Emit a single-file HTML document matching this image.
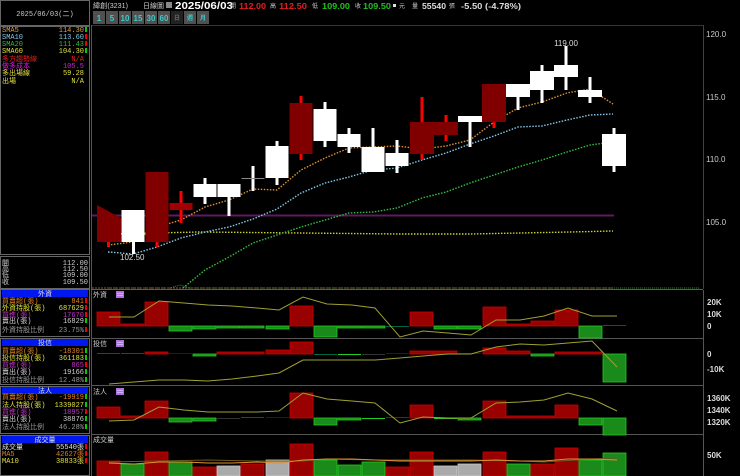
<!DOCTYPE html>
<html><head><meta charset="utf-8"><style>
html,body{margin:0;padding:0;background:#000;width:740px;height:476px;overflow:hidden}
svg{display:block}
text{font-family:"Liberation Sans","Noto Sans CJK TC",sans-serif}
.m{font-family:"Liberation Mono","Noto Sans CJK TC",monospace;font-size:7px}
</style></head><body>
<svg width="740" height="476" viewBox="0 0 740 476" xmlns="http://www.w3.org/2000/svg">
<rect width="740" height="476" fill="#000"/>
<!-- LEFT PANEL -->
<rect x="0.5" y="0.5" width="89" height="25" fill="none" stroke="#666"/>
<text x="45" y="16" class="m" fill="#ccc" text-anchor="middle">2025/06/03(二)</text>
<rect x="0.5" y="26.5" width="89" height="228" fill="none" stroke="#666"/>
<g class="m">
<text x="2" y="32" fill="#e0a040" class="m">SMA5</text><text x="84" y="32" fill="#e0a040" text-anchor="end" class="m">114.30</text><rect x="85" y="27" width="2" height="5" fill="#0c0"/>
<text x="2" y="39" fill="#80c8e8" class="m">SMA10</text><text x="84" y="39" fill="#80c8e8" text-anchor="end" class="m">113.60</text><rect x="85" y="34" width="2" height="5" fill="#e00"/>
<text x="2" y="46" fill="#30c030" class="m">SMA20</text><text x="84" y="46" fill="#30c030" text-anchor="end" class="m">111.43</text><rect x="85" y="41" width="2" height="5" fill="#e00"/>
<text x="2" y="53" fill="#e0e040" class="m">SMA60</text><text x="84" y="53" fill="#e0e040" text-anchor="end" class="m">104.30</text><rect x="85" y="48" width="2" height="5" fill="#0c0"/>
<text x="2" y="61" fill="#e02020" class="m">多方趨勢線</text><text x="84" y="61" fill="#e02020" text-anchor="end" class="m">N/A</text>
<text x="2" y="68" fill="#d020d0" class="m">做多成本</text><text x="84" y="68" fill="#d020d0" text-anchor="end" class="m">105.5</text>
<text x="2" y="75" fill="#e0e040" class="m">多出場線</text><text x="84" y="75" fill="#e0e040" text-anchor="end" class="m">59.28</text>
<text x="2" y="83" fill="#e0e040" class="m">出場</text><text x="84" y="83" fill="#e0e040" text-anchor="end" class="m">N/A</text>
</g>
<rect x="0.5" y="256.5" width="89" height="32" fill="none" stroke="#666"/>
<g fill="#ccc">
<text x="2" y="265" class="m" fill="#ccc">開</text><text x="88" y="265" class="m" fill="#ccc" text-anchor="end">112.00</text>
<text x="2" y="271" class="m" fill="#ccc">高</text><text x="88" y="271" class="m" fill="#ccc" text-anchor="end">112.50</text>
<text x="2" y="277" class="m" fill="#ccc">低</text><text x="88" y="277" class="m" fill="#ccc" text-anchor="end">109.00</text>
<text x="2" y="284" class="m" fill="#ccc">收</text><text x="88" y="284" class="m" fill="#ccc" text-anchor="end">109.50</text>
</g>
<!-- 外資 -->
<rect x="0.5" y="289.5" width="89" height="47" fill="none" stroke="#666"/>
<rect x="2" y="290" width="86" height="7" fill="#0018f0"/>
<text x="45" y="296" class="m" fill="#ddd" text-anchor="middle">外資</text>
<text x="2" y="303" class="m" fill="#e08020">買賣超(張)</text><text x="84" y="303" class="m" fill="#e08020" text-anchor="end">841</text><rect x="85" y="298" width="2" height="5" fill="#e00"/>
<text x="2" y="310" class="m" fill="#e0e040">外資持股(張)</text><text x="84" y="310" class="m" fill="#e0e040" text-anchor="end">687629</text><rect x="85" y="305" width="2" height="5" fill="#e00"/>
<text x="2" y="317" class="m" fill="#c030c0">買進(張)</text><text x="84" y="317" class="m" fill="#c030c0" text-anchor="end">17670</text><rect x="85" y="312" width="2" height="5" fill="#e00"/>
<text x="2" y="323" class="m" fill="#d0d0d0">賣出(張)</text><text x="84" y="323" class="m" fill="#d0d0d0" text-anchor="end">16829</text><rect x="85" y="318" width="2" height="5" fill="#0c0"/>
<text x="2" y="332" class="m" fill="#999">外資持股比例</text><text x="84" y="332" class="m" fill="#999" text-anchor="end">23.75%</text><rect x="85" y="327" width="2" height="5" fill="#e00"/>
<!-- 投信 -->
<rect x="0.5" y="338.5" width="89" height="46" fill="none" stroke="#666"/>
<rect x="2" y="339" width="86" height="7" fill="#0018f0"/>
<text x="45" y="345" class="m" fill="#ddd" text-anchor="middle">投信</text>
<text x="2" y="353" class="m" fill="#e08020">買賣超(張)</text><text x="84" y="353" class="m" fill="#e08020" text-anchor="end">-18301</text><rect x="85" y="348" width="2" height="5" fill="#0c0"/>
<text x="2" y="360" class="m" fill="#e0e040">投信持股(張)</text><text x="84" y="360" class="m" fill="#e0e040" text-anchor="end">361183</text><rect x="85" y="355" width="2" height="5" fill="#0c0"/>
<text x="2" y="367" class="m" fill="#c030c0">買進(張)</text><text x="84" y="367" class="m" fill="#c030c0" text-anchor="end">865</text><rect x="85" y="362" width="2" height="5" fill="#e00"/>
<text x="2" y="374" class="m" fill="#d0d0d0">賣出(張)</text><text x="84" y="374" class="m" fill="#d0d0d0" text-anchor="end">19166</text><rect x="85" y="369" width="2" height="5" fill="#0c0"/>
<text x="2" y="382" class="m" fill="#999">投信持股比例</text><text x="84" y="382" class="m" fill="#999" text-anchor="end">12.48%</text><rect x="85" y="377" width="2" height="5" fill="#0c0"/>
<!-- 法人 -->
<rect x="0.5" y="386.5" width="89" height="47" fill="none" stroke="#666"/>
<rect x="2" y="387" width="86" height="7" fill="#0018f0"/>
<text x="45" y="393" class="m" fill="#ddd" text-anchor="middle">法人</text>
<text x="2" y="399" class="m" fill="#e08020">買賣超(張)</text><text x="84" y="399" class="m" fill="#e08020" text-anchor="end">-19919</text><rect x="85" y="394" width="2" height="5" fill="#0c0"/>
<text x="2" y="407" class="m" fill="#e0e040">法人持股(張)</text><text x="84" y="407" class="m" fill="#e0e040" text-anchor="end">1339027</text><rect x="85" y="402" width="2" height="5" fill="#0c0"/>
<text x="2" y="414" class="m" fill="#c030c0">買進(張)</text><text x="84" y="414" class="m" fill="#c030c0" text-anchor="end">18957</text><rect x="85" y="409" width="2" height="5" fill="#e00"/>
<text x="2" y="421" class="m" fill="#d0d0d0">賣出(張)</text><text x="84" y="421" class="m" fill="#d0d0d0" text-anchor="end">38876</text><rect x="85" y="416" width="2" height="5" fill="#0c0"/>
<text x="2" y="429" class="m" fill="#999">法人持股比例</text><text x="84" y="429" class="m" fill="#999" text-anchor="end">46.28%</text><rect x="85" y="424" width="2" height="5" fill="#0c0"/>
<!-- 成交量 -->
<rect x="0.5" y="435.5" width="89" height="40" fill="none" stroke="#666"/>
<rect x="2" y="436" width="86" height="7" fill="#0018f0"/>
<text x="45" y="442" class="m" fill="#ddd" text-anchor="middle">成交量</text>
<text x="2" y="449" class="m" fill="#e0e0e0">成交量</text><text x="84" y="449" class="m" fill="#e0e0e0" text-anchor="end">55540張</text><rect x="85" y="444" width="2" height="5" fill="#e00"/>
<text x="2" y="456" class="m" fill="#e08020">MA5</text><text x="84" y="456" class="m" fill="#e08020" text-anchor="end">42627張</text><rect x="85" y="451" width="2" height="5" fill="#e00"/>
<text x="2" y="463" class="m" fill="#e0e040">MA10</text><text x="84" y="463" class="m" fill="#e0e040" text-anchor="end">38833張</text><rect x="85" y="458" width="2" height="5" fill="#e00"/>

<!-- HEADER -->
<text x="93" y="8" font-size="7" fill="#ccc" textLength="35" lengthAdjust="spacingAndGlyphs">緯創(3231)</text>
<text x="143" y="8" font-size="7" fill="#ccc">日線圖</text>
<rect x="166" y="2" width="6" height="6" fill="#888"/>
<text x="175" y="9" font-size="10" font-weight="bold" fill="#fff" textLength="58" lengthAdjust="spacingAndGlyphs">2025/06/03</text>
<text x="230" y="8" font-size="6" fill="#ccc">開</text>
<text x="239" y="9" font-size="8" font-weight="bold" fill="#e02020" textLength="27" lengthAdjust="spacingAndGlyphs">112.00</text>
<text x="270" y="8" font-size="6" fill="#ccc">高</text>
<text x="279" y="9" font-size="8" font-weight="bold" fill="#e02020" textLength="28" lengthAdjust="spacingAndGlyphs">112.50</text>
<text x="312" y="8" font-size="6" fill="#ccc">低</text>
<text x="322" y="9" font-size="8" font-weight="bold" fill="#20c020" textLength="28" lengthAdjust="spacingAndGlyphs">109.00</text>
<text x="355" y="8" font-size="6" fill="#ccc">收</text>
<text x="363" y="9" font-size="8" font-weight="bold" fill="#20c020" textLength="28" lengthAdjust="spacingAndGlyphs">109.50</text>
<rect x="393" y="4" width="3" height="3" fill="#ddd"/>
<text x="399" y="8" font-size="6" fill="#ccc">元</text>
<text x="412" y="8" font-size="6" fill="#ccc">量</text>
<text x="422" y="9" font-size="8" font-weight="bold" fill="#ddd" textLength="24" lengthAdjust="spacingAndGlyphs">55540</text>
<text x="449" y="8" font-size="6" fill="#ccc">張</text>
<text x="461" y="9" font-size="8" font-weight="bold" fill="#ddd" textLength="60" lengthAdjust="spacingAndGlyphs">-5.50 (-4.78%)</text>
<!-- buttons -->
<g font-size="8" font-weight="bold" fill="#40c8c8" text-anchor="middle">
<rect x="93" y="11" width="12" height="13" fill="#505050"/><text x="99" y="21">1</text>
<rect x="106" y="11" width="12" height="13" fill="#505050"/><text x="112" y="21">5</text>
<rect x="119" y="11" width="12" height="13" fill="#505050"/><text x="125" y="21">10</text>
<rect x="132" y="11" width="12" height="13" fill="#505050"/><text x="138" y="21">15</text>
<rect x="145" y="11" width="12" height="13" fill="#505050"/><text x="151" y="21">30</text>
<rect x="158" y="11" width="12" height="13" fill="#505050"/><text x="164" y="21">60</text>
<rect x="171" y="11" width="12" height="13" fill="#222"/><text x="177" y="20" font-size="6" fill="#666">日</text>
<rect x="184" y="11" width="12" height="13" fill="#505050"/><text x="190" y="20" font-size="6">週</text>
<rect x="197" y="11" width="12" height="13" fill="#505050"/><text x="203" y="20" font-size="6">月</text>
</g>

<!-- MAIN CHART FRAME -->
<line x1="91" y1="25.5" x2="703" y2="25.5" stroke="#5a2030"/>
<line x1="91.5" y1="25" x2="91.5" y2="476" stroke="#555"/>
<line x1="703.5" y1="25" x2="703.5" y2="289" stroke="#6a2a40"/>
<line x1="91" y1="289.5" x2="703" y2="289.5" stroke="#904060"/>
<g font-size="8" fill="#ccc"><text x="706" y="37">120.0</text><text x="706" y="100">115.0</text><text x="706" y="162">110.0</text><text x="706" y="225">105.0</text></g>
<polyline points="105,288 170,288 180,285 190,288 700,288" fill="none" stroke="#3a8a3a" stroke-width="1" stroke-dasharray="1,1"/>
<line x1="92" y1="288" x2="614" y2="288" stroke="#806040" stroke-width="1" stroke-dasharray="2,1"/>

<line x1="92" y1="215.5" x2="614" y2="215.5" stroke="#601a60" stroke-width="2"/>
<g fill="none" stroke-width="1.4" stroke-dasharray="1.5,1.5">
<polyline stroke="#d0d030" points="108,234 200,232 300,233 400,234 470,234 520,233 570,232 613,231"/>
<polyline stroke="#30c040" points="183,288 205,270 229,257 253,243 277,235 301,227 325,220 349,213 373,212 397,208 422,198 446,192 470,183 494,175 518,167 542,160 567,152 590,145 613,142"/>
<polyline stroke="#80c8e8" points="108,252 133,254 157,247 181,238 205,232 229,227 253,219 277,209 301,193 325,183 349,177 373,170 397,168 422,160 446,153 470,144 494,136 518,127 542,126 567,120 590,115 613,114"/>
<polyline stroke="#e09030" points="108,245 133,242 157,227 181,220 205,207 229,200 253,189 277,190 301,170 325,158 349,148 373,147 397,146 422,149 446,146 470,140 494,122 518,108 542,102 567,93 590,89 613,104"/>
</g>
<g>
<rect x="107" y="240" width="3" height="7" fill="#f00"/>
<polygon points="97,205 121,218 121,242 97,242" fill="#800000"/>
<rect x="132" y="240" width="3" height="14" fill="#fff"/>
<rect x="121.5" y="210" width="23" height="32" fill="#fff"/>
<text x="120" y="260" font-size="8" fill="#ddd">102.50</text>
<rect x="155.5" y="240" width="3" height="7" fill="#f00"/>
<rect x="145.5" y="172" width="23" height="70" fill="#800000"/>
<rect x="179.5" y="191" width="3" height="32" fill="#f00"/>
<rect x="169.5" y="203" width="23" height="7" fill="#a00000"/>
<rect x="203.5" y="178" width="3" height="26" fill="#fff"/><rect x="193.5" y="184" width="23" height="13" fill="#fff"/>
<rect x="227.5" y="184" width="3" height="32" fill="#fff"/><rect x="217.5" y="184" width="23" height="13" fill="#fff"/>
<rect x="251.5" y="166" width="3" height="25" fill="#fff"/><rect x="241.5" y="178" width="23" height="1" fill="#888"/>
<rect x="275.5" y="141" width="3" height="44" fill="#fff"/><rect x="265.5" y="146" width="23" height="32" fill="#fff"/>
<rect x="299.5" y="96" width="3" height="64" fill="#f00"/><rect x="289.5" y="103" width="23" height="51" fill="#800000"/>
<rect x="323.5" y="102" width="3" height="45" fill="#fff"/><rect x="313.5" y="109" width="23" height="32" fill="#fff"/>
<rect x="347.5" y="128" width="3" height="25" fill="#fff"/><rect x="337.5" y="134" width="23" height="13" fill="#fff"/>
<rect x="371.5" y="128" width="3" height="25" fill="#fff"/><rect x="361.5" y="147" width="23" height="25" fill="#fff"/>
<rect x="395.5" y="140" width="3" height="33" fill="#fff"/><rect x="385.5" y="153" width="23" height="13" fill="#fff"/>
<rect x="420.5" y="97" width="3" height="63" fill="#f00"/><rect x="410" y="122" width="24" height="32" fill="#800000"/>
<rect x="444.5" y="115" width="3" height="26" fill="#f00"/><rect x="434" y="122" width="24" height="13" fill="#800000"/>
<rect x="468.5" y="116" width="3" height="31" fill="#fff"/><rect x="458" y="116" width="24" height="6" fill="#fff"/>
<rect x="492.5" y="115" width="3" height="13" fill="#f00"/><rect x="482" y="84" width="24" height="38" fill="#800000"/>
<rect x="516.5" y="84" width="3" height="26" fill="#fff"/><rect x="506" y="84" width="24" height="13" fill="#fff"/>
<rect x="540.5" y="65" width="3" height="38" fill="#fff"/><rect x="530" y="71" width="24" height="19" fill="#fff"/>
<rect x="564.5" y="46" width="3" height="44" fill="#fff"/><rect x="554" y="65" width="24" height="12" fill="#fff"/>
<text x="566" y="46" font-size="8" fill="#ddd" text-anchor="middle">119.00</text>
<rect x="588.5" y="77" width="3" height="26" fill="#fff"/><rect x="578" y="90" width="24" height="7" fill="#fff"/>
<rect x="612.5" y="128" width="3" height="44" fill="#fff"/><rect x="602" y="134" width="24" height="32" fill="#fff"/>
</g>

<g stroke="#555">
<line x1="91" y1="338.5" x2="703" y2="338.5"/>
<line x1="91" y1="385.5" x2="703" y2="385.5"/>
<line x1="91" y1="434.5" x2="703" y2="434.5"/>
<line x1="703.5" y1="290" x2="703.5" y2="476"/>
</g>
<g font-size="7" fill="#ccc">
<text x="93" y="297">外資</text><text x="93" y="346">投信</text><text x="93" y="394">法人</text><text x="93" y="442">成交量</text>
</g>
<g fill="#b070e0"><rect x="116" y="291" width="8" height="7"/><rect x="116" y="340" width="8" height="7"/><rect x="116" y="388" width="8" height="7"/></g>
<g stroke="#e0e0ff" stroke-width="0.6"><line x1="117" y1="293.5" x2="123" y2="293.5"/><line x1="117" y1="295.5" x2="123" y2="295.5"/><line x1="117" y1="342.5" x2="123" y2="342.5"/><line x1="117" y1="344.5" x2="123" y2="344.5"/><line x1="117" y1="390.5" x2="123" y2="390.5"/><line x1="117" y1="392.5" x2="123" y2="392.5"/></g>
<g font-size="8" font-weight="bold" fill="#ddd">
<text x="707" y="305">20K</text><text x="707" y="317">10K</text><text x="707" y="329">0</text>
<text x="707" y="357">0</text><text x="707" y="372">-10K</text>
<text x="707" y="401">1360K</text><text x="707" y="413">1340K</text><text x="707" y="425">1320K</text>
<text x="707" y="458">50K</text>
</g>

<g stroke-width="0.8">
<rect x="97" y="312" width="23" height="14" fill="#900" stroke="#c00"/>
<rect x="121" y="324" width="23" height="2" fill="#900" stroke="#c00"/>
<rect x="145" y="302" width="23" height="24" fill="#900" stroke="#c00"/>
<rect x="169" y="326" width="23" height="5" fill="#1a8a1a" stroke="#2c2"/>
<rect x="193" y="326" width="23" height="3" fill="#1a8a1a" stroke="#2c2"/>
<rect x="217" y="326" width="23" height="2" fill="#1a8a1a" stroke="#2c2"/>
<rect x="241" y="326" width="23" height="2" fill="#1a8a1a" stroke="#2c2"/>
<rect x="266" y="326" width="23" height="3" fill="#1a8a1a" stroke="#2c2"/>
<rect x="290" y="306" width="23" height="20" fill="#900" stroke="#c00"/>
<rect x="314" y="326" width="23" height="11" fill="#1a8a1a" stroke="#2c2"/>
<rect x="338" y="326" width="23" height="2" fill="#1a8a1a" stroke="#2c2"/>
<rect x="362" y="326" width="23" height="2" fill="#1a8a1a" stroke="#2c2"/>
<rect x="386" y="326" width="23" height="1" fill="#064" />
<rect x="410" y="312" width="23" height="14" fill="#900" stroke="#c00"/>
<rect x="434" y="326" width="23" height="3" fill="#1a8a1a" stroke="#2c2"/>
<rect x="458" y="326" width="23" height="3" fill="#1a8a1a" stroke="#2c2"/>
<rect x="483" y="307" width="23" height="19" fill="#900" stroke="#c00"/>
<rect x="507" y="324" width="23" height="2" fill="#900" stroke="#c00"/>
<rect x="531" y="321" width="23" height="5" fill="#900" stroke="#c00"/>
<rect x="555" y="310" width="23" height="16" fill="#900" stroke="#c00"/>
<rect x="579" y="326" width="23" height="12" fill="#1a8a1a" stroke="#2c2"/>
<rect x="603" y="325" width="23" height="1" fill="#c00"/>
</g>
<polyline fill="none" stroke="#a0a030" stroke-width="1" points="109,317 134,317 159,301 184,303 208,305 232,306 257,308 279,310 303,297 327,304 352,305 375,308 400,337 423,331 448,333 471,335 496,320 520,320 544,316 568,308 592,316 617,316"/>

<g stroke-width="0.8">
<rect x="97" y="353" width="23" height="1" fill="#c00"/>
<rect x="121" y="353" width="23" height="1" fill="#c00"/>
<rect x="145" y="352" width="23" height="2" fill="#900" stroke="#c00"/>
<rect x="169" y="353" width="23" height="1" fill="#600"/>
<rect x="193" y="354" width="23" height="2" fill="#1a8a1a" stroke="#2c2"/>
<rect x="217" y="352" width="23" height="2" fill="#900" stroke="#c00"/>
<rect x="241" y="352" width="23" height="2" fill="#900" stroke="#c00"/>
<rect x="266" y="350" width="23" height="4" fill="#900" stroke="#c00"/>
<rect x="290" y="342" width="23" height="12" fill="#900" stroke="#c00"/>
<rect x="314" y="354" width="23" height="1" fill="#064"/>
<rect x="338" y="354" width="23" height="1" fill="#2c2"/>
<rect x="362" y="354" width="23" height="1" fill="#333"/>
<rect x="386" y="353" width="23" height="1" fill="#600"/>
<rect x="410" y="351" width="23" height="3" fill="#900" stroke="#c00"/>
<rect x="434" y="351" width="23" height="3" fill="#900" stroke="#c00"/>
<rect x="458" y="353" width="23" height="1" fill="#600"/>
<rect x="483" y="348" width="23" height="6" fill="#900" stroke="#c00"/>
<rect x="507" y="351" width="23" height="3" fill="#900" stroke="#c00"/>
<rect x="531" y="354" width="23" height="2" fill="#1a8a1a" stroke="#2c2"/>
<rect x="555" y="352" width="23" height="2" fill="#900" stroke="#c00"/>
<rect x="579" y="352" width="23" height="2" fill="#900" stroke="#c00"/>
<rect x="603" y="354" width="23" height="28" fill="#1a8a1a" stroke="#2c2"/>
</g>
<polyline fill="none" stroke="#a0a030" stroke-width="1" points="109,384 134,382 159,380 184,380 208,381 232,379 257,376 279,373 303,360 327,360 352,360 375,360 400,358 423,356 448,354 471,354 496,347 520,344 544,345 568,343 592,341 617,367"/>

<g stroke-width="0.8">
<rect x="97" y="407" width="23" height="11" fill="#900" stroke="#c00"/>
<rect x="121" y="416" width="23" height="2" fill="#900" stroke="#c00"/>
<rect x="145" y="401" width="23" height="17" fill="#900" stroke="#c00"/>
<rect x="169" y="418" width="23" height="4" fill="#1a8a1a" stroke="#2c2"/>
<rect x="193" y="418" width="23" height="3" fill="#1a8a1a" stroke="#2c2"/>
<rect x="217" y="418" width="23" height="1" fill="#333"/>
<rect x="241" y="417" width="23" height="1" fill="#c00"/>
<rect x="266" y="417" width="23" height="1" fill="#600"/>
<rect x="290" y="393" width="23" height="25" fill="#900" stroke="#c00"/>
<rect x="314" y="418" width="23" height="7" fill="#1a8a1a" stroke="#2c2"/>
<rect x="338" y="418" width="23" height="2" fill="#1a8a1a" stroke="#2c2"/>
<rect x="362" y="418" width="23" height="1" fill="#2c2"/>
<rect x="386" y="417" width="23" height="1" fill="#333"/>
<rect x="410" y="405" width="23" height="13" fill="#900" stroke="#c00"/>
<rect x="434" y="418" width="23" height="1" fill="#2c2"/>
<rect x="458" y="418" width="23" height="2" fill="#1a8a1a" stroke="#2c2"/>
<rect x="483" y="401" width="23" height="17" fill="#900" stroke="#c00"/>
<rect x="507" y="416" width="23" height="2" fill="#900" stroke="#c00"/>
<rect x="531" y="416" width="23" height="2" fill="#900" stroke="#c00"/>
<rect x="555" y="405" width="23" height="13" fill="#900" stroke="#c00"/>
<rect x="579" y="418" width="23" height="7" fill="#1a8a1a" stroke="#2c2"/>
<rect x="603" y="418" width="23" height="17" fill="#1a8a1a" stroke="#2c2"/>
</g>
<polyline fill="none" stroke="#a0a030" stroke-width="1" points="109,421 134,420 159,407 184,410 208,412 232,412 257,412 279,411 303,393 327,399 352,401 375,403 400,423 423,417 448,418 471,418 496,403 520,402 544,400 568,393 592,399 617,411"/>

<g stroke-width="0.8">
<rect x="97" y="461" width="23" height="15" fill="#900" stroke="#c00"/>
<rect x="121" y="464" width="23" height="12" fill="#1a8a1a" stroke="#2c2"/>
<rect x="145" y="452" width="23" height="24" fill="#900" stroke="#c00"/>
<rect x="169" y="462" width="23" height="14" fill="#1a8a1a" stroke="#2c2"/>
<rect x="193" y="467" width="23" height="9" fill="#900" stroke="#c00"/>
<rect x="217" y="466" width="23" height="10" fill="#aaa" stroke="#ccc"/>
<rect x="241" y="464" width="23" height="12" fill="#900" stroke="#c00"/>
<rect x="266" y="460" width="23" height="16" fill="#aaa" stroke="#ccc"/>
<rect x="290" y="444" width="23" height="32" fill="#900" stroke="#c00"/>
<rect x="314" y="460" width="23" height="16" fill="#1a8a1a" stroke="#2c2"/>
<rect x="338" y="465" width="23" height="11" fill="#1a8a1a" stroke="#2c2"/>
<rect x="362" y="462" width="23" height="14" fill="#1a8a1a" stroke="#2c2"/>
<rect x="386" y="467" width="23" height="9" fill="#900" stroke="#c00"/>
<rect x="410" y="452" width="23" height="24" fill="#900" stroke="#c00"/>
<rect x="434" y="466" width="23" height="10" fill="#aaa" stroke="#ccc"/>
<rect x="458" y="464" width="23" height="12" fill="#aaa" stroke="#ccc"/>
<rect x="483" y="452" width="23" height="24" fill="#900" stroke="#c00"/>
<rect x="507" y="464" width="23" height="12" fill="#1a8a1a" stroke="#2c2"/>
<rect x="531" y="464" width="23" height="12" fill="#900" stroke="#c00"/>
<rect x="555" y="448" width="23" height="28" fill="#900" stroke="#c00"/>
<rect x="579" y="460" width="23" height="16" fill="#1a8a1a" stroke="#2c2"/>
<rect x="603" y="453" width="23" height="23" fill="#1a8a1a" stroke="#2c2"/>
</g>
<polyline fill="none" stroke="#6a5a20" stroke-width="1" points="109,462 159,461 208,460 257,461 303,461 327,459 375,460 423,460 471,460 520,461 544,462 592,459 617,458"/>
<polyline fill="none" stroke="#e09030" stroke-width="1" points="109,463 134,464 159,462 184,462 208,463 232,463 257,462 279,463 303,460 327,459 352,459 375,460 400,461 423,461 448,461 471,461 496,460 520,461 544,461 568,459 592,459 617,460"/>
</svg>
</body></html>
